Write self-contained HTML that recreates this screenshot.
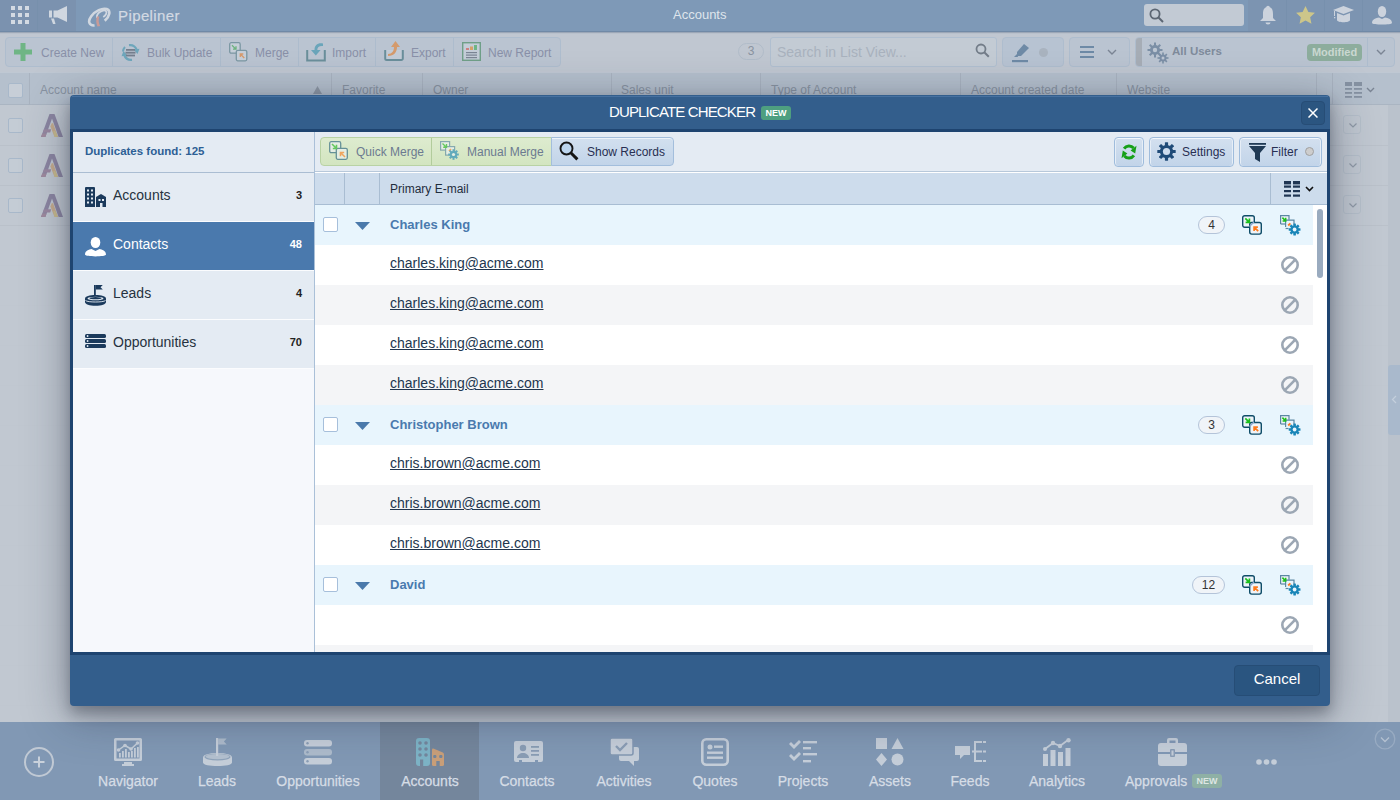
<!DOCTYPE html>
<html><head><meta charset="utf-8">
<style>
*{box-sizing:border-box;margin:0;padding:0}
html,body{width:1400px;height:800px;overflow:hidden}
body{position:relative;font-family:"Liberation Sans",sans-serif;background:#c0c7d0;color:#222}
.a{position:absolute}
.t{white-space:nowrap}
#top{left:0;top:0;width:1400px;height:32px;z-index:2;background:#7e99b7;border-bottom:1px solid #7089a6;box-shadow:0 1px 1px rgba(90,110,135,.35)}
#toolbar{left:0;top:31px;width:1400px;height:41px;background:#c0c7d1}
#hdr{left:0;top:72px;width:1400px;height:33px;background:#b5c0cd;border-top:1px solid #bfc8d3;border-bottom:1px solid #aab5c2}
#list{left:0;top:105px;width:1400px;height:617px;background:#c1c8d1}
#nav{left:0;top:722px;width:1400px;height:78px;background:#8198b4}
.tb{font-size:12px;color:#8990a8;margin-top:1px}
.tg{background:#bac4d1;border:1px solid #aebdce;border-radius:4px}
.sep{width:1px;background:#adbccd}
.cb{width:15px;height:15px;border:1px solid #a8b8ca;border-radius:2px;background:#c4ccd5}
.sep2{top:0;width:1px;height:32px;background:#a9b3c0}
.th{top:10px;font-size:12px;color:#8893a1}
.dd{width:18px;height:19px;border:1px solid #b5bfca;border-radius:3px}
.nt{top:51px;font-size:14px;color:#d6dde6;-webkit-text-stroke:0.25px #d6dde6;text-align:center;white-space:nowrap}
#modal{left:70px;top:95px;width:1260px;height:611px;background:#335e8c;border-radius:4px;box-shadow:0 7px 14px rgba(20,28,40,.3),0 8px 44px 4px rgba(30,40,60,.36)}
#mbody{left:0;top:34px;width:1260px;height:526px;border:3px solid #1e4470;background:#fff}
#side{left:0;top:0;width:242px;height:520px;background:#f6f8fc;border-right:1px solid #aac0d8}
.si{left:0;width:241px;height:49px;background:#e4ebf3;border-bottom:1px solid #fbfcfe}
.si.sel{background:#4a79ad}
.sit{left:40px;font-size:14px;color:#263240}
.sic{left:189px;width:40px;text-align:right;font-size:11px;font-weight:700;color:#222}
#content{left:242px;top:0;width:1012px;height:520px;background:#fff}
.tbt{top:13px;font-size:12px}
.dim{opacity:.6}
.rbtn{top:5px;height:30px;background:linear-gradient(#d3e0ef,#c2d4e9);border:1px solid #9fbcdc;border-radius:4px;box-shadow:inset 0 1px 0 #f4f8fc,inset 1px 0 0 #e6eef7,inset -1px 0 0 #e6eef7}
#rows{left:0;top:73px;width:998px;height:447px;overflow:hidden}
.grp,.rec{left:0;width:998px;height:40px}
.grp{background:#e8f5fd}
.rec{background:#fff}
.rec.g{background:#f4f5f7}
.cbm{left:8px;top:12px;width:15px;height:15px;background:#fff;border:1px solid #a6bfdb;border-radius:2px}
.gname{left:75px;top:12px;font-size:13px;font-weight:700;color:#4a7aae}
.pill{top:11px;height:18px;border:1px solid #b4c4d9;border-radius:9px;background:#f0f4f8;font-size:12px;color:#333;text-align:center;line-height:16px}
.em{left:75px;top:10px;font-size:14px;color:#22364e;text-decoration:underline}
</style></head>
<body>
<!-- TOP BAR -->
<div id="top" class="a">
  <div class="a" style="left:0;top:0;width:38px;height:31px;background:#7b92af;border-right:1px solid #7790ac"></div>
  <div class="a" style="left:38px;top:0;width:38px;height:31px;background:#7b92af"></div>
  <!-- grid -->
  <svg class="a" style="left:11px;top:6px" width="18" height="18" viewBox="0 0 18 18" fill="#d3dae3">
    <rect x="0" y="0" width="4" height="4"/><rect x="7" y="0" width="4" height="4"/><rect x="14" y="0" width="4" height="4"/>
    <rect x="0" y="7" width="4" height="4"/><rect x="7" y="7" width="4" height="4"/><rect x="14" y="7" width="4" height="4"/>
    <rect x="0" y="14" width="4" height="4"/><rect x="7" y="14" width="4" height="4"/><rect x="14" y="14" width="4" height="4"/>
  </svg>
  <!-- megaphone -->
  <svg class="a" style="left:48px;top:5px" width="20" height="20" viewBox="0 0 20 20" fill="#d0d7e0">
    <rect x="1" y="5.5" width="3" height="7"/><path d="M5.5 5.5h4L19 1v16l-9.5-4.5h-4z"/><path d="M3 13.5h3l1.5 5.5h-2.5z"/>
  </svg>
  <!-- logo -->
  <svg class="a" style="left:87px;top:4px" width="28" height="23" viewBox="0 0 28 23">
    <g transform="rotate(-35 14 11.5)">
      <path d="M3 16 A11.5 6.3 0 1 1 14 18" fill="none" stroke="#d0d7e0" stroke-width="2.6"/>
      <path d="M10 12 A5.5 3 0 1 1 15 14" fill="none" stroke="#d0d7e0" stroke-width="1.8"/>
    </g>
    <path d="M10 12.5 C8.8 16 9 19 10.5 22.5 L13.2 22 C11.5 19 11.3 16 12.3 12.5Z" fill="#c99a96"/>
  </svg>
  <div class="a t" style="left:118px;top:7px;font-size:15px;color:#d3dae3;font-weight:400;letter-spacing:0.4px;-webkit-text-stroke:0.2px #d3dae3">Pipeliner</div>
  <div class="a t" style="left:673px;top:7px;font-size:13px;color:#dfe5ec">Accounts</div>
  <!-- search -->
  <div class="a" style="left:1144px;top:4px;width:100px;height:22px;background:#c2cad4;border-radius:3px"></div>
  <svg class="a" style="left:1149px;top:8px" width="15" height="15" viewBox="0 0 15 15"><circle cx="6" cy="6" r="4.6" fill="none" stroke="#5c6673" stroke-width="1.8"/><path d="M9.5 9.5l4.5 4.5" stroke="#5c6673" stroke-width="2"/></svg>
  <div class="a" style="left:1248px;top:0;width:152px;height:31px;background:#7c94b1"></div>
  <div class="a" style="left:1286px;top:0;width:1px;height:31px;background:#7790ad"></div>
  <div class="a" style="left:1324px;top:0;width:1px;height:31px;background:#7790ad"></div>
  <div class="a" style="left:1362px;top:0;width:1px;height:31px;background:#7790ad"></div>
  <!-- bell -->
  <svg class="a" style="left:1259px;top:5px" width="18" height="20" viewBox="0 0 18 20" fill="#ccd3dd">
    <circle cx="9" cy="2.5" r="1.8"/><path d="M9 2 C5 2 4 5 4 9 L4 13 L1 16 L17 16 L14 13 L14 9 C14 5 13 2 9 2Z"/><path d="M6.5 17.5 h5 a2.5 2 0 0 1 -5 0z"/>
  </svg>
  <!-- star -->
  <svg class="a" style="left:1295px;top:5px" width="21" height="21" viewBox="0 0 24 24" fill="#cdc68a">
    <path d="M12 1l3.3 7 7.5.9-5.5 5.1 1.5 7.5L12 17.8 5.2 21.5l1.5-7.5L1.2 8.9l7.5-.9z"/>
  </svg>
  <!-- cap -->
  <svg class="a" style="left:1333px;top:6px" width="22" height="18" viewBox="0 0 22 18" fill="#ccd3dd">
    <path d="M0 4 L10.5 0 L21 4 L10.5 8 Z"/><path d="M4 7 L10.5 9.5 L17 7 L17 14 C17 17 4 17 4 14Z"/><rect x="1" y="5" width="1" height="5"/><rect x="1" y="11" width="1.3" height="1.3"/>
  </svg>
  <!-- user -->
  <svg class="a" style="left:1372px;top:6px" width="20" height="19" viewBox="0 0 20 19" fill="#ccd3dd">
    <ellipse cx="10" cy="5.5" rx="4.2" ry="5.5"/><path d="M0 17 C0 13 4 12 7 11.5 L10 13 L13 11.5 C16 12 20 13 20 17 C20 19 0 19 0 17Z"/>
  </svg>
</div>
<!-- TOOLBAR -->
<div id="toolbar" class="a">
  <div class="a tg" style="left:5px;top:6px;width:556px;height:30px"></div>
  <div class="a sep" style="left:112px;top:7px;height:28px"></div>
  <div class="a sep" style="left:220px;top:7px;height:28px"></div>
  <div class="a sep" style="left:298px;top:7px;height:28px"></div>
  <div class="a sep" style="left:375px;top:7px;height:28px"></div>
  <div class="a sep" style="left:453px;top:7px;height:28px"></div>
  <!-- plus -->
  <svg class="a" style="left:14px;top:12px" width="18" height="18" viewBox="0 0 18 18" fill="#6fb585"><path d="M6.5 0h5v6.5H18v5h-6.5V18h-5v-6.5H0v-5h6.5z"/></svg>
  <div class="a t tb" style="left:41px;top:14px">Create New</div>
  <!-- bulk update -->
  <svg class="a" style="left:120px;top:11px" width="21" height="21" viewBox="0 0 21 21">
    <path d="M9 3.2 A7.5 7.5 0 0 1 16.8 8" fill="none" stroke="#6ea6bb" stroke-width="2.2"/>
    <path d="M13.5 7.5 L19.5 6.8 L17.5 12 Z" fill="#6ea6bb"/>
    <path d="M12 17.8 A7.5 7.5 0 0 1 4.2 13" fill="none" stroke="#6ea6bb" stroke-width="2.2"/>
    <path d="M7.5 13.5 L1.5 14.2 L3.5 9 Z" fill="#6ea6bb"/>
    <path d="M3 9.5 A7.5 7.5 0 0 1 5 5" fill="none" stroke="#6ea6bb" stroke-width="2"/>
    <rect x="6" y="7" width="9" height="1.8" fill="#757f8e"/><rect x="5.5" y="9.8" width="10" height="1.8" fill="#757f8e"/><rect x="6" y="12.6" width="9" height="1.8" fill="#757f8e"/>
  </svg>
  <div class="a t tb" style="left:147px;top:14px">Bulk Update</div>
  <!-- merge -->
  <svg class="a" style="left:229px;top:11px" width="20" height="20" viewBox="0 0 20 20">
    <rect x="0.7" y="0.7" width="10.5" height="10.5" rx="1.5" fill="#c6cfd9" stroke="#7b97a3" stroke-width="1.3"/>
    <rect x="7.3" y="8.3" width="10.5" height="10.5" rx="1.5" fill="#c6cfd9" stroke="#7b97a3" stroke-width="1.3"/>
    <path d="M3 3.3l3.8 3.8M7 4.2v3H4" stroke="#6cb27e" stroke-width="1.3" fill="none"/>
    <path d="M15.3 16l-3.8-3.8M11.3 15v-3h3" stroke="#d69a6c" stroke-width="1.3" fill="none"/>
  </svg>
  <div class="a t tb" style="left:255px;top:14px">Merge</div>
  <!-- import -->
  <svg class="a" style="left:306px;top:9px" width="20" height="22" viewBox="0 0 20 22">
    <path d="M1.2 10v10.5h17.6V10" fill="none" stroke="#6a8f9b" stroke-width="2"/>
    <path d="M17 3.5 C12 2.5 8.5 5 8.5 10 L5 10 L9.8 15.5 L14.6 10 L11.3 10 C11.3 7 13.5 5.5 17 6Z" fill="#6aa5ba"/>
  </svg>
  <div class="a t tb" style="left:332px;top:14px">Import</div>
  <!-- export -->
  <svg class="a" style="left:384px;top:9px" width="20" height="21" viewBox="0 0 20 21">
    <path d="M1.2 10v8.5a1.5 1.5 0 0 0 1.5 1.5h14.6a1.5 1.5 0 0 0 1.5-1.5V10" fill="#c3ccd7" stroke="#6a8f9b" stroke-width="2"/>
    <path d="M4 14 C8 14 10 11 10 7 L7 7 L11.5 1 L16 7 L13 7 C13 12 10 16 4 16Z" fill="#d49a6c"/>
  </svg>
  <div class="a t tb" style="left:411px;top:14px">Export</div>
  <!-- report -->
  <svg class="a" style="left:462px;top:11px" width="19" height="19" viewBox="0 0 19 19">
    <rect x="0.7" y="0.7" width="17.6" height="17.6" fill="#c4cdd8" stroke="#6f9f88" stroke-width="1.4"/>
    <rect x="4" y="6" width="3" height="2" fill="#cf7f7f"/><rect x="8" y="4.5" width="3" height="3.5" fill="#d4a26a"/><rect x="12" y="3" width="3" height="5" fill="#6fb585"/>
    <rect x="4" y="10" width="11" height="1.2" fill="#7b8594"/><rect x="4" y="12.5" width="11" height="1.2" fill="#7b8594"/><rect x="4" y="15" width="11" height="1.2" fill="#7b8594"/>
  </svg>
  <div class="a t tb" style="left:488px;top:14px">New Report</div>

  <div class="a" style="left:738px;top:12px;width:26px;height:17px;border:1px solid #b1bcc9;border-radius:9px;font-size:12px;color:#8a93a0;text-align:center;line-height:15px">3</div>
  <div class="a" style="left:770px;top:6px;width:227px;height:30px;background:#c3cbd4;border:1px solid #b0bfd0;border-radius:3px"></div>
  <div class="a t" style="left:777px;top:13px;font-size:14px;color:#a9b2be">Search in List View...</div>
  <svg class="a" style="left:975px;top:12px" width="15" height="15" viewBox="0 0 15 15"><circle cx="6" cy="6" r="4.5" fill="none" stroke="#737d89" stroke-width="1.8"/><path d="M9.3 9.3l4.5 4.5" stroke="#737d89" stroke-width="2"/></svg>
  <div class="a tg" style="left:1002px;top:6px;width:62px;height:30px;background:#b7c3d2"></div>
  <svg class="a" style="left:1012px;top:12px" width="20" height="20" viewBox="0 0 20 20">
    <path d="M12 1 L17 5 L9 13 L5 13 L5 9 Z" fill="#6e8aa6"/><path d="M5 11 L2 14 L6 14Z" fill="#6e8aa6"/><rect x="0" y="17" width="16" height="2.2" fill="#6e8aa6"/>
  </svg>
  <div class="a" style="left:1039px;top:17px;width:9px;height:9px;border-radius:50%;background:#a9b3bf"></div>
  <div class="a tg" style="left:1069px;top:6px;width:61px;height:30px"></div>
  <svg class="a" style="left:1080px;top:15px" width="14" height="12" viewBox="0 0 14 12" fill="#6e8aa6"><rect y="0" width="14" height="2"/><rect y="5" width="14" height="2"/><rect y="10" width="14" height="2"/></svg>
  <svg class="a" style="left:1107px;top:18px" width="10" height="6" viewBox="0 0 10 6"><path d="M1 1l4 4 4-4" fill="none" stroke="#7b8594" stroke-width="1.4"/></svg>
  <div class="a tg" style="left:1135px;top:6px;width:260px;height:30px"></div>
  <div class="a" style="left:1136px;top:7px;width:6px;height:28px;background:#a6adb6;border-radius:3px 0 0 3px"></div>
  <div class="a sep" style="left:1367px;top:7px;height:28px"></div>
  <svg class="a" style="left:1147px;top:11px" width="22" height="22" viewBox="0 0 22 22">
    <g fill="#7b8fa6"><circle cx="8" cy="8" r="5"/><rect x="7" y="0.5" width="2" height="15"/><rect x="0.5" y="7" width="15" height="2"/><rect x="7" y="0.5" width="2" height="15" transform="rotate(45 8 8)"/><rect x="7" y="0.5" width="2" height="15" transform="rotate(-45 8 8)"/></g>
    <circle cx="8" cy="8" r="2.2" fill="#bcc6d2"/>
    <g fill="#7b8fa6"><circle cx="16" cy="16" r="3.5"/><rect x="15.2" y="10.5" width="1.6" height="11"/><rect x="10.5" y="15.2" width="11" height="1.6"/><rect x="15.2" y="10.5" width="1.6" height="11" transform="rotate(45 16 16)"/><rect x="15.2" y="10.5" width="1.6" height="11" transform="rotate(-45 16 16)"/></g>
    <circle cx="16" cy="16" r="1.5" fill="#bcc6d2"/>
  </svg>
  <div class="a t" style="left:1172px;top:14px;font-size:11.5px;font-weight:700;color:#7f8b9b">All Users</div>
  <div class="a" style="left:1307px;top:13px;width:55px;height:17px;background:#8dad9d;border-radius:4px;color:#cad8d1;font-size:11px;font-weight:700;text-align:center;line-height:17px">Modified</div>
  <svg class="a" style="left:1376px;top:18px" width="10" height="6" viewBox="0 0 10 6"><path d="M1 1l4 4 4-4" fill="none" stroke="#7b8594" stroke-width="1.4"/></svg>
</div>
<!-- HEADER -->
<div id="hdr" class="a">
  <div class="a cb" style="left:8px;top:10px;background:#c7ced7"></div>
  <div class="a sep2" style="left:29px"></div>
  <div class="a t th" style="left:40px">Account name</div>
  <svg class="a" style="left:313px;top:13px" width="9" height="8" viewBox="0 0 9 8"><path d="M4.5 0L9 8H0z" fill="#8e98a5"/></svg>
  <div class="a sep2" style="left:331px"></div>
  <div class="a t th" style="left:342px">Favorite</div>
  <div class="a sep2" style="left:422px"></div>
  <div class="a t th" style="left:433px">Owner</div>
  <div class="a sep2" style="left:611px"></div>
  <div class="a t th" style="left:621px">Sales unit</div>
  <div class="a sep2" style="left:760px"></div>
  <div class="a t th" style="left:771px">Type of Account</div>
  <div class="a sep2" style="left:960px"></div>
  <div class="a t th" style="left:971px">Account created date</div>
  <div class="a sep2" style="left:1116px"></div>
  <div class="a t th" style="left:1127px">Website</div>
  <div class="a sep2" style="left:1316px"></div>
  <div class="a sep2" style="left:1332px"></div>
  <svg class="a" style="left:1345px;top:9px" width="17" height="16" viewBox="0 0 17 16" fill="#8692a2">
    <rect x="0" y="0" width="7" height="4"/><rect x="9" y="0" width="8" height="4"/>
    <rect x="0" y="6" width="7" height="1.8"/><rect x="9" y="6" width="8" height="1.8"/>
    <rect x="0" y="10" width="7" height="1.8"/><rect x="9" y="10" width="8" height="1.8"/>
    <rect x="0" y="14" width="7" height="1.8"/><rect x="9" y="14" width="8" height="1.8"/>
  </svg>
  <svg class="a" style="left:1366px;top:14px" width="9" height="6" viewBox="0 0 9 6"><path d="M1 1l3.5 3.5L8 1" fill="none" stroke="#7b8594" stroke-width="1.4"/></svg>
</div>
<!-- LIST -->
<div id="list" class="a">
  <div class="a" style="left:0;top:40px;width:1400px;height:1px;background:#bac1ca"></div>
  <div class="a" style="left:0;top:80px;width:1400px;height:1px;background:#bac1ca"></div>
  <div class="a" style="left:0;top:120px;width:1400px;height:1px;background:#bac1ca"></div>
  <div class="a" style="left:0;top:160px;width:1400px;height:1px;background:#c0c7d0"></div>
  <div class="a" style="left:0;top:200px;width:1400px;height:1px;background:#c0c7d0"></div>
  <div class="a" style="left:0;top:240px;width:1400px;height:1px;background:#c0c7d0"></div>
  <div class="a" style="left:0;top:280px;width:1400px;height:1px;background:#c0c7d0"></div>
  <div class="a" style="left:0;top:320px;width:1400px;height:1px;background:#c0c7d0"></div>
  <div class="a" style="left:0;top:360px;width:1400px;height:1px;background:#c0c7d0"></div>
  <div class="a" style="left:0;top:400px;width:1400px;height:1px;background:#c0c7d0"></div>
  <div class="a" style="left:0;top:440px;width:1400px;height:1px;background:#c0c7d0"></div>
  <div class="a" style="left:0;top:480px;width:1400px;height:1px;background:#c0c7d0"></div>
  <div class="a" style="left:0;top:520px;width:1400px;height:1px;background:#c0c7d0"></div>
  <div class="a" style="left:0;top:560px;width:1400px;height:1px;background:#c0c7d0"></div>
  <div class="a" style="left:0;top:600px;width:1400px;height:1px;background:#c0c7d0"></div>
  <div class="a cb" style="left:8px;top:13px"></div>
  <div class="a cb" style="left:8px;top:53px"></div>
  <div class="a cb" style="left:8px;top:93px"></div>
  <svg class="a logo" style="left:41px;top:9px" width="23" height="23" viewBox="0 0 23 23"><path d="M8.5 0H13.5L22 23H17.6L11 4.6 4.4 23H0Z" fill="#8c86a2"/><path d="M3 15.2H10.2L9.2 18.4H2Z" fill="#9a88a0"/><path d="M0 23H4.4L5.6 19.6H1.2Z" fill="#a08a9e"/><path d="M10.6 9.6L12 9 17 23H13.6L9.4 12.4Z" fill="#c6ac8e"/><path d="M12.2 17L14.2 17 17 23H13.6Z" fill="#c8bb8e"/></svg>
  <svg class="a logo" style="left:41px;top:49px" width="23" height="23" viewBox="0 0 23 23"><path d="M8.5 0H13.5L22 23H17.6L11 4.6 4.4 23H0Z" fill="#8c86a2"/><path d="M3 15.2H10.2L9.2 18.4H2Z" fill="#9a88a0"/><path d="M0 23H4.4L5.6 19.6H1.2Z" fill="#a08a9e"/><path d="M10.6 9.6L12 9 17 23H13.6L9.4 12.4Z" fill="#c6ac8e"/><path d="M12.2 17L14.2 17 17 23H13.6Z" fill="#c8bb8e"/></svg>
  <svg class="a logo" style="left:41px;top:89px" width="23" height="23" viewBox="0 0 23 23"><path d="M8.5 0H13.5L22 23H17.6L11 4.6 4.4 23H0Z" fill="#8c86a2"/><path d="M3 15.2H10.2L9.2 18.4H2Z" fill="#9a88a0"/><path d="M0 23H4.4L5.6 19.6H1.2Z" fill="#a08a9e"/><path d="M10.6 9.6L12 9 17 23H13.6L9.4 12.4Z" fill="#c6ac8e"/><path d="M12.2 17L14.2 17 17 23H13.6Z" fill="#c8bb8e"/></svg>
  <div class="a dd" style="left:1343px;top:10px"><svg class="a" style="left:5px;top:7px" width="8" height="5" viewBox="0 0 8 5"><path d="M0.5 0.5l3.5 3.5 3.5-3.5" fill="none" stroke="#8f99a6" stroke-width="1.2"/></svg></div>
  <div class="a dd" style="left:1343px;top:50px"><svg class="a" style="left:5px;top:7px" width="8" height="5" viewBox="0 0 8 5"><path d="M0.5 0.5l3.5 3.5 3.5-3.5" fill="none" stroke="#8f99a6" stroke-width="1.2"/></svg></div>
  <div class="a dd" style="left:1343px;top:90px"><svg class="a" style="left:5px;top:7px" width="8" height="5" viewBox="0 0 8 5"><path d="M0.5 0.5l3.5 3.5 3.5-3.5" fill="none" stroke="#8f99a6" stroke-width="1.2"/></svg></div>
  <div class="a" style="left:1388px;top:0;width:12px;height:617px;background:#bac2cc"></div>
  <div class="a" style="left:1388px;top:260px;width:12px;height:70px;background:#a9b9cc;border-radius:3px 0 0 3px"></div>
  <svg class="a" style="left:1391px;top:290px" width="6" height="9" viewBox="0 0 6 9"><path d="M5 1L1.5 4.5 5 8" fill="none" stroke="#c4cfdc" stroke-width="1.2"/></svg>
</div>
<!-- BOTTOM NAV -->
<div id="nav" class="a">
  <div class="a" style="left:380px;top:0;width:99px;height:78px;background:#74869c"></div>
  <svg class="a" style="left:24px;top:25px" width="30" height="30" viewBox="0 0 30 30"><circle cx="15" cy="15" r="14" fill="none" stroke="#c0c9d4" stroke-width="2"/><path d="M15 9.5v11M9.5 15h11" stroke="#c9d1db" stroke-width="2"/></svg>
  <!-- navigator -->
  <svg class="a" style="left:114px;top:16px" width="28" height="28" viewBox="0 0 28 28" fill="#c5ced9">
    <path d="M0 1.5A1.5 1.5 0 0 1 1.5 0h25A1.5 1.5 0 0 1 28 1.5V21.5a1.5 1.5 0 0 1-1.5 1.5h-25A1.5 1.5 0 0 1 0 21.5zM2.5 2.5v18h23v-18z"/>
    <rect x="10" y="24" width="8" height="2"/><rect x="8" y="26" width="12" height="2"/>
    <rect x="5" y="15" width="1.8" height="4.5"/><rect x="8" y="13" width="1.8" height="6.5"/><rect x="11" y="11" width="1.8" height="8.5"/><rect x="14" y="14" width="1.8" height="5.5"/><rect x="17" y="13" width="1.8" height="6.5"/><rect x="20" y="10" width="1.8" height="9.5"/><rect x="23" y="9" width="1.8" height="10.5"/>
    <path d="M4.5 12L11 7.5 17 11 23.5 5" fill="none" stroke="#c5ced9" stroke-width="1.5"/><circle cx="4.5" cy="12" r="1.8"/><circle cx="11" cy="7.5" r="1.8"/><circle cx="17" cy="11" r="1.8"/><circle cx="23.5" cy="5" r="1.8"/>
  </svg>
  <!-- leads -->
  <svg class="a" style="left:203px;top:16px" width="29" height="28" viewBox="0 0 29 28">
    <path d="M15.2 0.5h8.5l-2.8 3 2.8 3h-8.5z" fill="#adbbcb"/>
    <path d="M0 19.5c0-3 6.5-4.5 14.5-4.5S29 16.5 29 19.5v5c0 2.5-6.5 3.5-14.5 3.5S0 27 0 24.5z" fill="#c5ced9"/>
    <ellipse cx="14.5" cy="19" rx="13" ry="3.4" fill="#8fa3ba"/>
    <ellipse cx="14.5" cy="18.6" rx="12" ry="2.6" fill="#b3c0cf"/>
    <rect x="13" y="0" width="2.2" height="18" fill="#c5ced9"/>
  </svg>
  <!-- opportunities -->
  <svg class="a" style="left:304px;top:18px" width="28" height="25" viewBox="0 0 28 25" fill="#c5ced9">
    <rect x="0" y="0" width="28" height="6.5" rx="3"/><rect x="0" y="9" width="28" height="6.5" rx="3" fill="#adbbcb"/><rect x="0" y="18" width="28" height="6.5" rx="3"/>
    <circle cx="3.5" cy="3.2" r="1.2" fill="#8a9db5"/><circle cx="3.5" cy="12.2" r="1.2" fill="#8a9db5"/><circle cx="3.5" cy="21.2" r="1.2" fill="#8a9db5"/>
  </svg>
  <!-- accounts -->
  <svg class="a" style="left:416px;top:16px" width="28" height="28" viewBox="0 0 28 28">
    <rect x="0" y="0" width="14" height="28" rx="3" fill="#7db3c6"/>
    <g fill="#74869c"><circle cx="4" cy="5" r="1.8"/><circle cx="10" cy="5" r="1.8"/><circle cx="4" cy="11" r="1.8"/><circle cx="10" cy="11" r="1.8"/><circle cx="4" cy="17" r="1.8"/><circle cx="10" cy="17" r="1.8"/><rect x="4" y="21.5" width="3.2" height="6.5"/></g>
    <path d="M16 12 Q16 10 18 10.8 L26.8 14.6 Q28 15.2 28 16.5 V26.5 Q28 28 26.5 28 H17.5 Q16 28 16 26.5 Z" fill="#c99f79"/>
    <g fill="#74869c"><rect x="17.2" y="17" width="3.2" height="3" rx="1"/><rect x="23.2" y="17" width="3.2" height="3" rx="1"/><rect x="20.3" y="23" width="3.4" height="5"/></g>
  </svg>
  <!-- contacts -->
  <svg class="a" style="left:514px;top:19px" width="29" height="22" viewBox="0 0 29 22" fill="#c5ced9">
    <path d="M0 2a2 2 0 0 1 2-2h25a2 2 0 0 1 2 2v17a2 2 0 0 1-2 2h-3v-2h-3v2h-13v-2h-3v2H2a2 2 0 0 1-2-2z"/>
    <g fill="#8a9db5"><circle cx="9" cy="7" r="3.2"/><path d="M3 17c0-3 3-5 6-5s6 2 6 5z"/><rect x="17" y="5" width="8" height="1.8"/><rect x="17" y="9" width="8" height="1.8"/><rect x="17" y="13" width="8" height="1.8"/></g>
  </svg>
  <!-- activities -->
  <svg class="a" style="left:610px;top:16px" width="29" height="28" viewBox="0 0 29 28" fill="#c5ced9">
    <path d="M9 9h18a2 2 0 0 1 2 2v10a2 2 0 0 1-2 2h-3v5l-5-5H11a2 2 0 0 1-2-2z"/>
    <path d="M0 2a2 2 0 0 1 2-2h19a2 2 0 0 1 2 2v13a2 2 0 0 1-2 2H2a2 2 0 0 1-2-2z" stroke="#8398b2" stroke-width="1.5"/>
    <path d="M6 8l4 4 7-7" fill="none" stroke="#8a9db5" stroke-width="2.4"/>
  </svg>
  <!-- quotes -->
  <svg class="a" style="left:701px;top:16px" width="28" height="28" viewBox="0 0 28 28">
    <rect x="1.3" y="1.3" width="25.4" height="25.4" rx="4" fill="none" stroke="#c5ced9" stroke-width="2.6"/>
    <g fill="#c5ced9"><circle cx="9" cy="9" r="2.5"/><rect x="13" y="7.5" width="9" height="2.4"/><rect x="6" y="13.5" width="16" height="2.4"/><rect x="6" y="18.5" width="16" height="2.4"/></g>
  </svg>
  <!-- projects -->
  <svg class="a" style="left:789px;top:18px" width="28" height="24" viewBox="0 0 28 24" fill="#c5ced9">
    <path d="M0 4l2-2 3 3 5-5 2 2-7 7z"/><path d="M0 16l2-2 3 3 5-5 2 2-7 7z"/>
    <rect x="14" y="1" width="14" height="2.4"/><rect x="14" y="7" width="8" height="2.4"/><rect x="14" y="13" width="14" height="2.4"/><rect x="14" y="20" width="8" height="2.4"/>
  </svg>
  <!-- assets -->
  <svg class="a" style="left:876px;top:16px" width="28" height="28" viewBox="0 0 28 28" fill="#c5ced9">
    <rect x="0" y="0" width="11" height="11"/><path d="M21.5 0l6 11h-12z"/><path d="M5.5 15l5.5 6.5-5.5 6.5L0 21.5z"/><circle cx="21.5" cy="21.5" r="6"/>
  </svg>
  <!-- feeds -->
  <svg class="a" style="left:955px;top:19px" width="31" height="21" viewBox="0 0 31 21" fill="#c5ced9">
    <path d="M0 5h15v9H9l-4 4v-4H0z"/>
    <rect x="19" y="0" width="2" height="21"/><rect x="21" y="0" width="6" height="2"/><rect x="21" y="9.5" width="6" height="2"/><rect x="21" y="19" width="6" height="2"/>
    <rect x="17" y="9.5" width="2" height="2"/><rect x="28" y="0" width="3" height="2"/><rect x="28" y="9.5" width="3" height="2"/><rect x="28" y="19" width="3" height="2"/>
  </svg>
  <!-- analytics -->
  <svg class="a" style="left:1043px;top:16px" width="28" height="28" viewBox="0 0 28 28" fill="#c5ced9">
    <rect x="0" y="16" width="5" height="12"/><rect x="7.5" y="12" width="5" height="16"/><rect x="15" y="14" width="5" height="14"/><rect x="22.5" y="10" width="5" height="18"/>
    <path d="M2 11l8-6 7 3 8-6" fill="none" stroke="#c5ced9" stroke-width="1.8"/><circle cx="10" cy="5" r="2.2"/><circle cx="17" cy="8" r="2.2"/><circle cx="25.5" cy="2.2" r="2.2"/><circle cx="2" cy="11" r="2"/>
  </svg>
  <!-- approvals -->
  <svg class="a" style="left:1158px;top:16px" width="29" height="28" viewBox="0 0 29 28" fill="#c5ced9">
    <path d="M9 5V2a2 2 0 0 1 2-2h7a2 2 0 0 1 2 2v3h-2.5V2.5h-6V5z"/>
    <path d="M0 8a3 3 0 0 1 3-3h23a3 3 0 0 1 3 3v6H0z"/><path d="M0 16h29v9a3 3 0 0 1-3 3H3a3 3 0 0 1-3-3z"/>
    <rect x="12" y="11" width="5" height="8" rx="1" fill="#8a9db5"/><rect x="13.5" y="12.5" width="2" height="5" fill="#c5ced9"/>
  </svg>
  <svg class="a" style="left:1256px;top:37px" width="21" height="6" viewBox="0 0 21 6" fill="#c5ced9"><circle cx="3" cy="3" r="2.8"/><circle cx="10.5" cy="3" r="2.8"/><circle cx="18" cy="3" r="2.8"/></svg>
  <svg class="a" style="left:1374px;top:6px" width="22" height="22" viewBox="0 0 22 22"><circle cx="11" cy="11" r="9.8" fill="none" stroke="#98abc2" stroke-width="1.3"/><path d="M7 9.5l4 4 4-4" fill="none" stroke="#b3c0d0" stroke-width="1.4"/></svg>

  <div class="a nt" style="left:78px;width:100px">Navigator</div>
  <div class="a nt" style="left:167px;width:100px">Leads</div>
  <div class="a nt" style="left:268px;width:100px">Opportunities</div>
  <div class="a nt" style="left:380px;width:100px">Accounts</div>
  <div class="a nt" style="left:477px;width:100px">Contacts</div>
  <div class="a nt" style="left:574px;width:100px">Activities</div>
  <div class="a nt" style="left:665px;width:100px">Quotes</div>
  <div class="a nt" style="left:753px;width:100px">Projects</div>
  <div class="a nt" style="left:840px;width:100px">Assets</div>
  <div class="a nt" style="left:920px;width:100px">Feeds</div>
  <div class="a nt" style="left:1007px;width:100px">Analytics</div>
  <div class="a nt" style="left:1125px;text-align:left">Approvals</div>
  <div class="a" style="left:1192px;top:52px;width:30px;height:14px;background:#8eb0a5;border-radius:3px;color:#dde6e3;font-size:9px;font-weight:700;text-align:center;line-height:14px">NEW</div>
</div>
<!-- MODAL -->
<div id="modal" class="a">
  <div class="a" style="left:2px;top:1px;width:1256px;height:1px;background:#4771a0"></div>
  <div class="a t" style="left:539px;top:8px;font-size:15px;color:#fff;letter-spacing:-0.85px">DUPLICATE CHECKER</div>
  <div class="a" style="left:691px;top:11px;width:30px;height:14px;background:#4e9f80;border-radius:3px;color:#fff;font-size:9px;font-weight:700;text-align:center;line-height:14px">NEW</div>
  <div class="a" style="left:1231px;top:6px;width:24px;height:24px;background:#2b5580;border:1px solid #274d76;border-radius:4px"></div>
  <svg class="a" style="left:1238px;top:13px" width="10" height="10" viewBox="0 0 10 10"><path d="M0.5 0.5l9 9M9.5 0.5l-9 9" stroke="#fff" stroke-width="1.5"/></svg>

  <div id="mbody" class="a">
    <!-- sidebar -->
    <div id="side" class="a">
      <div class="a" style="left:0;top:0;width:241px;height:41px;background:#e4ebf3;border-bottom:1px solid #aabdd2"></div>
      <div class="a t" style="left:12px;top:13px;font-size:11.5px;font-weight:700;color:#2d5f95">Duplicates found: 125</div>
      <div class="a si" style="top:41px"></div>
      <div class="a si sel" style="top:90px"></div>
      <div class="a si" style="top:139px"></div>
      <div class="a si" style="top:188px"></div>
      <!-- icons -->
      <svg class="a" style="left:12px;top:55px" width="21" height="20" viewBox="0 0 21 20" fill="#1b3a5c">
        <path d="M0 1a1 1 0 0 1 1-1h8a1 1 0 0 1 1 1v19H0z"/>
        <g fill="#e4ebf3"><rect x="2" y="2.5" width="2" height="2"/><rect x="6" y="2.5" width="2" height="2"/><rect x="2" y="6.5" width="2" height="2"/><rect x="6" y="6.5" width="2" height="2"/><rect x="2" y="10.5" width="2" height="2"/><rect x="6" y="10.5" width="2" height="2"/><rect x="2" y="14.5" width="2" height="2"/><rect x="6" y="14.5" width="2" height="2"/></g>
        <path d="M11 10l5-3 5 3v10H11z"/>
        <g fill="#e4ebf3"><rect x="13.5" y="12" width="2" height="2"/><rect x="17" y="12" width="2" height="2"/><rect x="15" y="16" width="2.5" height="4"/></g>
      </svg>
      <div class="a t sit" style="top:55px">Accounts</div>
      <div class="a t sic" style="top:57px">3</div>

      <svg class="a" style="left:12px;top:105px" width="21" height="20" viewBox="0 0 21 20" fill="#fff">
        <ellipse cx="10.5" cy="5.5" rx="4.8" ry="5.5"/><path d="M0 17.5C0 13.5 4 12.5 6.5 12l4 2 4-2c2.5.5 6.5 1.5 6.5 5.5 0 2.5-21 2.5-21 0z"/>
      </svg>
      <div class="a t sit" style="top:104px;color:#fff">Contacts</div>
      <div class="a t sic" style="top:106px;color:#fff">48</div>

      <svg class="a" style="left:12px;top:153px" width="21" height="21" viewBox="0 0 21 21" fill="#1b3a5c">
        <rect x="9" y="0" width="1.8" height="11"/><path d="M10.8 0h7l-2.3 2.3 2.3 2.3h-7z"/>
        <path d="M0 13.5c0-2.3 4.5-3.5 10.5-3.5S21 11.2 21 13.5v3.5c0 2.3-4.5 3.7-10.5 3.7S0 19.3 0 17z"/>
        <ellipse cx="10.5" cy="13.5" rx="8" ry="1.8" fill="#e4ebf3"/><ellipse cx="10.5" cy="13.2" rx="6" ry="1.1" fill="#1b3a5c"/>
        <path d="M0.5 15.5c2 2 18 2 20 0" fill="none" stroke="#e4ebf3" stroke-width="0.9"/>
      </svg>
      <div class="a t sit" style="top:153px">Leads</div>
      <div class="a t sic" style="top:155px">4</div>

      <svg class="a" style="left:12px;top:202px" width="21" height="14" viewBox="0 0 21 14" fill="#1b3a5c">
        <rect x="0" y="0" width="21" height="4" rx="1.5"/><rect x="0" y="5" width="21" height="4" rx="1.5"/><rect x="0" y="10" width="21" height="4" rx="1.5"/>
        <circle cx="2.6" cy="2" r=".9" fill="#e4ebf3"/><circle cx="2.6" cy="7" r=".9" fill="#e4ebf3"/><circle cx="2.6" cy="12" r=".9" fill="#e4ebf3"/>
      </svg>
      <div class="a t sit" style="top:202px">Opportunities</div>
      <div class="a t sic" style="top:204px">70</div>
    </div>
    <!-- content -->
    <div id="content" class="a">
      <div class="a" style="left:0;top:0;width:1012px;height:40px;background:#e4ebf3;border-bottom:1px solid #b7c8da"></div>
      <!-- toolbar buttons -->
      <div class="a" style="left:5px;top:5px;width:232px;height:29px;background:linear-gradient(#ddebcf,#d3e5c0);border:1px solid #b9d2a4;border-radius:4px 0 0 4px"></div>
      <div class="a" style="left:116px;top:6px;width:1px;height:27px;background:#b2cc9c"></div>
      <div class="a" style="left:236px;top:5px;width:123px;height:29px;background:linear-gradient(#d2e0ef,#c2d4e9);border:1px solid #a3bedc;border-radius:0 4px 4px 0;box-shadow:inset 0 1px 0 #eef4fa"></div>
      <svg class="a dim" style="left:14px;top:9px" width="19" height="19" viewBox="0 0 19 19">
        <rect x="0.7" y="0.7" width="11" height="11" rx="1.5" fill="#eef2f6" stroke="#1b5877" stroke-width="1.3"/>
        <rect x="7.3" y="7.3" width="11" height="11" rx="1.5" fill="#eef2f6" stroke="#1b5877" stroke-width="1.3"/>
        <path d="M3 3l4 4M7.5 3.8v3.7H3.8" stroke="#19b319" stroke-width="1.6" fill="none"/>
        <path d="M16 16l-4-4M11.5 15.2v-3.7h3.7" stroke="#ff7a1a" stroke-width="1.6" fill="none"/>
      </svg>
      <div class="a t tbt" style="left:41px;color:#6c7a90">Quick Merge</div>
      <svg class="a dim" style="left:125px;top:9px" width="19" height="19" viewBox="0 0 19 19">
        <rect x="0.6" y="0.6" width="9" height="8.5" fill="#eef2f6" stroke="#4f7f9c" stroke-width="1.2"/>
        <rect x="5.6" y="5.6" width="9" height="8.5" fill="#eef2f6" stroke="#4f7f9c" stroke-width="1.2"/>
        <path d="M2.5 2.5l3.5 3.5M6.5 3v3.3H3.2" stroke="#19b319" stroke-width="1.4" fill="none"/>
        <path d="M9 10l2-2" stroke="#ff7a1a" stroke-width="1.6"/>
        <g transform="translate(13.5 13.5)" fill="#1583b5"><circle r="3.6"/><rect x="-1" y="-5.3" width="2" height="10.6"/><rect x="-5.3" y="-1" width="10.6" height="2"/><rect x="-1" y="-5.3" width="2" height="10.6" transform="rotate(45)"/><rect x="-1" y="-5.3" width="2" height="10.6" transform="rotate(-45)"/><circle r="1.6" fill="#eef2f6"/></g>
      </svg>
      <div class="a t tbt" style="left:152px;color:#6c7a90">Manual Merge</div>
      <svg class="a" style="left:244px;top:9px" width="20" height="20" viewBox="0 0 20 20"><circle cx="7.5" cy="7.5" r="6" fill="#bcd5ee" stroke="#151515" stroke-width="1.9"/><path d="M11.8 11.8l6.6 6.6" stroke="#151515" stroke-width="3"/></svg>
      <div class="a t tbt" style="left:272px;color:#282f52">Show Records</div>

      <div class="a rbtn" style="left:799px;width:30px"></div>
      <svg class="a" style="left:805px;top:11px" width="18" height="18" viewBox="0 0 18 18">
        <path d="M4.1 5.6 A6 6 0 0 1 13.6 5.1" fill="none" stroke="#16a018" stroke-width="3"/>
        <path d="M10.6 7.6 L16.5 2.7 L15.2 10.6 Z" fill="#16a018"/>
        <path d="M13.9 12.4 A6 6 0 0 1 4.4 12.9" fill="none" stroke="#16a018" stroke-width="3"/>
        <path d="M7.4 10.4 L1.5 15.3 L2.8 7.4 Z" fill="#16a018"/>
      </svg>
      <div class="a rbtn" style="left:834px;width:85px"></div>
      <svg class="a" style="left:842px;top:10px" width="19" height="19" viewBox="0 0 19 19">
        <g transform="translate(9.5 9.5)" fill="#1f4b78"><circle r="6.6"/><rect x="-1.6" y="-9.2" width="3.2" height="18.4" rx=".4"/><rect x="-9.2" y="-1.6" width="18.4" height="3.2" rx=".4"/><rect x="-1.6" y="-9.2" width="3.2" height="18.4" rx=".4" transform="rotate(45)"/><rect x="-1.6" y="-9.2" width="3.2" height="18.4" rx=".4" transform="rotate(-45)"/><circle r="3.6" fill="#cddcee"/></g>
      </svg>
      <div class="a t tbt" style="left:867px;color:#282f52">Settings</div>
      <div class="a rbtn" style="left:924px;width:83px"></div>
      <svg class="a" style="left:934px;top:11px" width="17" height="19" viewBox="0 0 17 19" fill="#203a55">
        <rect x="0" y="0" width="17" height="1.8"/><path d="M0 3h17l-6 7v9l-5-3v-6z"/>
      </svg>
      <div class="a t tbt" style="left:956px;color:#282f52">Filter</div>
      <div class="a" style="left:990px;top:15px;width:9px;height:9px;border-radius:50%;background:#cdcdcd;border:1px solid #a0a0a0"></div>

      <!-- header row -->
      <div class="a" style="left:0;top:41px;width:1012px;height:32px;background:#cddcec;border-bottom:1px solid #a8bdd3"></div>
      <div class="a" style="left:29px;top:41px;width:1px;height:32px;background:#a9bdd2"></div>
      <div class="a" style="left:64px;top:41px;width:1px;height:32px;background:#a9bdd2"></div>
      <div class="a" style="left:955px;top:41px;width:1px;height:32px;background:#a9bdd2"></div>
      <div class="a t" style="left:75px;top:50px;font-size:12px;color:#1f2d3d">Primary E-mail</div>
      <svg class="a" style="left:969px;top:49px" width="16" height="16" viewBox="0 0 16 16" fill="#1f3553">
        <rect x="0" y="0" width="7" height="3.4"/><rect x="9" y="0" width="7" height="3.4"/>
        <rect x="0" y="4.5" width="7" height="2.2"/><rect x="9" y="4.5" width="7" height="2.2"/>
        <rect x="0" y="9" width="7" height="2.2"/><rect x="9" y="9" width="7" height="2.2"/>
        <rect x="0" y="13.5" width="7" height="2.2"/><rect x="9" y="13.5" width="7" height="2.2"/>
      </svg>
      <svg class="a" style="left:990px;top:54px" width="9" height="6" viewBox="0 0 9 6"><path d="M1 1l3.5 3.5L8 1" fill="none" stroke="#111" stroke-width="1.6"/></svg>

      <!-- rows -->
      <div id="rows" class="a">
<div class="a grp" style="top:0px"><div class="a cbm"></div><svg class="a" style="left:40px;top:17px" width="15" height="8" viewBox="0 0 15 8"><path d="M0 0h15L7.5 8z" fill="#4a79ab"/></svg><div class="a t gname">Charles King</div><div class="a pill" style="left:883px;width:27px">4</div><svg class="a" style="left:927px;top:10px" width="21" height="21" viewBox="0 0 21 21"><rect x="0.7" y="0.7" width="11.6" height="11.6" rx="2" fill="#eef3f8" stroke="#0f4d69" stroke-width="1.4"/><rect x="7.7" y="7.5" width="11.6" height="11.6" rx="2" fill="#eef3f8" stroke="#0f4d69" stroke-width="1.4"/><path d="M7.5 11.5L12 7" stroke="#8aa6d0" stroke-width="1.1"/><path d="M3.3 3.3l3.6 3.6M7.4 3.6v3.8H3.6" stroke="#1cbf1c" stroke-width="1.7" fill="none"/><path d="M16.2 16.2l-3.6-3.6M12.1 15.9v-3.8h3.8" stroke="#ff7a1a" stroke-width="1.7" fill="none"/></svg><svg class="a" style="left:965px;top:10px" width="22" height="22" viewBox="0 0 22 22"><path d="M0.6 9V0.6H9V4.8" fill="#eef3f8" stroke="#5b87a3" stroke-width="1.2"/><path d="M0.6 9H5.6" fill="none" stroke="#5b87a3" stroke-width="1.2"/><path d="M5.6 12V5.2H14V9.5" fill="none" stroke="#5b87a3" stroke-width="1.2"/><path d="M5.6 13.5H8.5" fill="none" stroke="#5b87a3" stroke-width="1.2"/><path d="M2.4 2.6l3 3M5.7 2.8v3.1H2.6" stroke="#1cbf1c" stroke-width="1.5" fill="none"/><path d="M8.2 10.5l2.2-2.2" stroke="#ff7a1a" stroke-width="1.8"/><g transform="translate(14.6 14.5)" fill="#1a86b8"><circle r="4.1"/><rect x="-1.3" y="-5.9" width="2.6" height="11.8" rx=".5"/><rect x="-5.9" y="-1.3" width="11.8" height="2.6" rx=".5"/><rect x="-1.3" y="-5.9" width="2.6" height="11.8" rx=".5" transform="rotate(45)"/><rect x="-1.3" y="-5.9" width="2.6" height="11.8" rx=".5" transform="rotate(-45)"/><circle r="1.9" fill="#e8f5fd"/></g></svg></div>
<div class="a rec" style="top:40px"><div class="a t em">charles.king@acme.com</div><svg class="a" style="left:966px;top:11px" width="18" height="18" viewBox="0 0 18 18"><circle cx="9" cy="9" r="7.7" fill="none" stroke="#9ca7b4" stroke-width="2.6"/><path d="M4.2 13.8L13.8 4.2" stroke="#9ca7b4" stroke-width="2.6"/></svg></div>
<div class="a rec g" style="top:80px"><div class="a t em">charles.king@acme.com</div><svg class="a" style="left:966px;top:11px" width="18" height="18" viewBox="0 0 18 18"><circle cx="9" cy="9" r="7.7" fill="none" stroke="#9ca7b4" stroke-width="2.6"/><path d="M4.2 13.8L13.8 4.2" stroke="#9ca7b4" stroke-width="2.6"/></svg></div>
<div class="a rec" style="top:120px"><div class="a t em">charles.king@acme.com</div><svg class="a" style="left:966px;top:11px" width="18" height="18" viewBox="0 0 18 18"><circle cx="9" cy="9" r="7.7" fill="none" stroke="#9ca7b4" stroke-width="2.6"/><path d="M4.2 13.8L13.8 4.2" stroke="#9ca7b4" stroke-width="2.6"/></svg></div>
<div class="a rec g" style="top:160px"><div class="a t em">charles.king@acme.com</div><svg class="a" style="left:966px;top:11px" width="18" height="18" viewBox="0 0 18 18"><circle cx="9" cy="9" r="7.7" fill="none" stroke="#9ca7b4" stroke-width="2.6"/><path d="M4.2 13.8L13.8 4.2" stroke="#9ca7b4" stroke-width="2.6"/></svg></div>
<div class="a grp" style="top:200px"><div class="a cbm"></div><svg class="a" style="left:40px;top:17px" width="15" height="8" viewBox="0 0 15 8"><path d="M0 0h15L7.5 8z" fill="#4a79ab"/></svg><div class="a t gname">Christopher Brown</div><div class="a pill" style="left:883px;width:27px">3</div><svg class="a" style="left:927px;top:10px" width="21" height="21" viewBox="0 0 21 21"><rect x="0.7" y="0.7" width="11.6" height="11.6" rx="2" fill="#eef3f8" stroke="#0f4d69" stroke-width="1.4"/><rect x="7.7" y="7.5" width="11.6" height="11.6" rx="2" fill="#eef3f8" stroke="#0f4d69" stroke-width="1.4"/><path d="M7.5 11.5L12 7" stroke="#8aa6d0" stroke-width="1.1"/><path d="M3.3 3.3l3.6 3.6M7.4 3.6v3.8H3.6" stroke="#1cbf1c" stroke-width="1.7" fill="none"/><path d="M16.2 16.2l-3.6-3.6M12.1 15.9v-3.8h3.8" stroke="#ff7a1a" stroke-width="1.7" fill="none"/></svg><svg class="a" style="left:965px;top:10px" width="22" height="22" viewBox="0 0 22 22"><path d="M0.6 9V0.6H9V4.8" fill="#eef3f8" stroke="#5b87a3" stroke-width="1.2"/><path d="M0.6 9H5.6" fill="none" stroke="#5b87a3" stroke-width="1.2"/><path d="M5.6 12V5.2H14V9.5" fill="none" stroke="#5b87a3" stroke-width="1.2"/><path d="M5.6 13.5H8.5" fill="none" stroke="#5b87a3" stroke-width="1.2"/><path d="M2.4 2.6l3 3M5.7 2.8v3.1H2.6" stroke="#1cbf1c" stroke-width="1.5" fill="none"/><path d="M8.2 10.5l2.2-2.2" stroke="#ff7a1a" stroke-width="1.8"/><g transform="translate(14.6 14.5)" fill="#1a86b8"><circle r="4.1"/><rect x="-1.3" y="-5.9" width="2.6" height="11.8" rx=".5"/><rect x="-5.9" y="-1.3" width="11.8" height="2.6" rx=".5"/><rect x="-1.3" y="-5.9" width="2.6" height="11.8" rx=".5" transform="rotate(45)"/><rect x="-1.3" y="-5.9" width="2.6" height="11.8" rx=".5" transform="rotate(-45)"/><circle r="1.9" fill="#e8f5fd"/></g></svg></div>
<div class="a rec" style="top:240px"><div class="a t em">chris.brown@acme.com</div><svg class="a" style="left:966px;top:11px" width="18" height="18" viewBox="0 0 18 18"><circle cx="9" cy="9" r="7.7" fill="none" stroke="#9ca7b4" stroke-width="2.6"/><path d="M4.2 13.8L13.8 4.2" stroke="#9ca7b4" stroke-width="2.6"/></svg></div>
<div class="a rec g" style="top:280px"><div class="a t em">chris.brown@acme.com</div><svg class="a" style="left:966px;top:11px" width="18" height="18" viewBox="0 0 18 18"><circle cx="9" cy="9" r="7.7" fill="none" stroke="#9ca7b4" stroke-width="2.6"/><path d="M4.2 13.8L13.8 4.2" stroke="#9ca7b4" stroke-width="2.6"/></svg></div>
<div class="a rec" style="top:320px"><div class="a t em">chris.brown@acme.com</div><svg class="a" style="left:966px;top:11px" width="18" height="18" viewBox="0 0 18 18"><circle cx="9" cy="9" r="7.7" fill="none" stroke="#9ca7b4" stroke-width="2.6"/><path d="M4.2 13.8L13.8 4.2" stroke="#9ca7b4" stroke-width="2.6"/></svg></div>
<div class="a grp" style="top:360px"><div class="a cbm"></div><svg class="a" style="left:40px;top:17px" width="15" height="8" viewBox="0 0 15 8"><path d="M0 0h15L7.5 8z" fill="#4a79ab"/></svg><div class="a t gname">David</div><div class="a pill" style="left:877px;width:33px">12</div><svg class="a" style="left:927px;top:10px" width="21" height="21" viewBox="0 0 21 21"><rect x="0.7" y="0.7" width="11.6" height="11.6" rx="2" fill="#eef3f8" stroke="#0f4d69" stroke-width="1.4"/><rect x="7.7" y="7.5" width="11.6" height="11.6" rx="2" fill="#eef3f8" stroke="#0f4d69" stroke-width="1.4"/><path d="M7.5 11.5L12 7" stroke="#8aa6d0" stroke-width="1.1"/><path d="M3.3 3.3l3.6 3.6M7.4 3.6v3.8H3.6" stroke="#1cbf1c" stroke-width="1.7" fill="none"/><path d="M16.2 16.2l-3.6-3.6M12.1 15.9v-3.8h3.8" stroke="#ff7a1a" stroke-width="1.7" fill="none"/></svg><svg class="a" style="left:965px;top:10px" width="22" height="22" viewBox="0 0 22 22"><path d="M0.6 9V0.6H9V4.8" fill="#eef3f8" stroke="#5b87a3" stroke-width="1.2"/><path d="M0.6 9H5.6" fill="none" stroke="#5b87a3" stroke-width="1.2"/><path d="M5.6 12V5.2H14V9.5" fill="none" stroke="#5b87a3" stroke-width="1.2"/><path d="M5.6 13.5H8.5" fill="none" stroke="#5b87a3" stroke-width="1.2"/><path d="M2.4 2.6l3 3M5.7 2.8v3.1H2.6" stroke="#1cbf1c" stroke-width="1.5" fill="none"/><path d="M8.2 10.5l2.2-2.2" stroke="#ff7a1a" stroke-width="1.8"/><g transform="translate(14.6 14.5)" fill="#1a86b8"><circle r="4.1"/><rect x="-1.3" y="-5.9" width="2.6" height="11.8" rx=".5"/><rect x="-5.9" y="-1.3" width="11.8" height="2.6" rx=".5"/><rect x="-1.3" y="-5.9" width="2.6" height="11.8" rx=".5" transform="rotate(45)"/><rect x="-1.3" y="-5.9" width="2.6" height="11.8" rx=".5" transform="rotate(-45)"/><circle r="1.9" fill="#e8f5fd"/></g></svg></div>
<div class="a rec" style="top:400px"><div class="a t em"></div><svg class="a" style="left:966px;top:11px" width="18" height="18" viewBox="0 0 18 18"><circle cx="9" cy="9" r="7.7" fill="none" stroke="#9ca7b4" stroke-width="2.6"/><path d="M4.2 13.8L13.8 4.2" stroke="#9ca7b4" stroke-width="2.6"/></svg></div>
<div class="a rec g" style="top:440px"><div class="a t em"></div><svg class="a" style="left:966px;top:11px" width="18" height="18" viewBox="0 0 18 18"><circle cx="9" cy="9" r="7.7" fill="none" stroke="#9ca7b4" stroke-width="2.6"/><path d="M4.2 13.8L13.8 4.2" stroke="#9ca7b4" stroke-width="2.6"/></svg></div>
      </div>
      <div class="a" style="left:1002px;top:77px;width:6px;height:69px;background:#9aabbf;border-radius:3px"></div>
    </div>
  </div>
  <!-- footer -->
  <div class="a" style="left:1164px;top:570px;width:86px;height:31px;background:#2a5580;border:1px solid #264d76;border-radius:4px;color:#fff;font-size:15px;text-align:center;line-height:26px">Cancel</div>
</div>
</body></html>
